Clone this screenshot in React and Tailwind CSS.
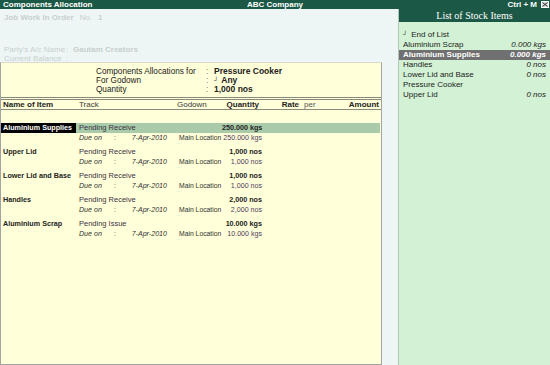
const allocations = [
  { name: 'Aluminium Supplies', track: 'Pending Receive', qty: '250.000 kgs', active: true },
  { name: 'Upper Lid', track: 'Pending Receive', qty: '1,000 nos' },
  { name: 'Lower Lid and Base', track: 'Pending Receive', qty: '1,000 nos' },
  { name: 'Handles', track: 'Pending Receive', qty: '2,000 nos' },
  { name: 'Aluminium Scrap', track: 'Pending Issue', qty: '10.000 kgs' },
]

const stockItems = [
  { name: 'Aluminium Scrap', qty: '0.000 kgs' },
  { name: 'Aluminium Supplies', qty: '0.000 kgs', active: true },
  { name: 'Handles', qty: '0 nos' },
  { name: 'Lower Lid and Base', qty: '0 nos' },
  { name: 'Pressure Cooker', qty: '' },
  { name: 'Upper Lid', qty: '0 nos' },
]

const App = () => {
  return (
    <div className="w-[550px] h-[365px] flex flex-col overflow-hidden bg-[#eef6f5] font-['Liberation_Sans',Arial,sans-serif] text-[#222]">
      {/* title bar */}
      <div className="h-[9px] flex items-center bg-[#1c5846] text-white font-bold text-[8px] leading-[9px]">
        <span className="w-[247px] pl-[3px] whitespace-nowrap">Components Allocation</span>
        <span className="flex-1 whitespace-nowrap">ABC Company</span>
        <span className="pr-[4px] whitespace-nowrap">Ctrl + M</span>
        <span className="w-[8px] h-[7px] mr-[1px] flex items-center justify-center bg-[#d6dcd9] border border-white">
          <svg width="6" height="5" viewBox="0 0 6 5">
            <path d="M0.5 0.5 L5.5 4.5 M5.5 0.5 L0.5 4.5" stroke="#333" strokeWidth="1" />
          </svg>
        </span>
      </div>

      <div className="flex flex-1 min-h-0">
        {/* left: voucher + allocation panel */}
        <div className="w-[398px] flex flex-col">
          <div className="h-[53px] pl-[4px] pt-[4px] text-[8px] text-[#c7cfce] overflow-hidden">
            <div className="leading-[9px] whitespace-nowrap">
              <span className="font-bold">Job Work In Order</span>
              <span className="ml-[6px]">No.</span>
              <span className="ml-[6px] font-bold">1</span>
            </div>
            <div className="mt-[24px] leading-[8.5px] flex whitespace-nowrap">
              <span className="w-[62px]">Party's A/c Name</span>
              <span className="w-[7px]">:</span>
              <span className="font-bold">Gautam Creators</span>
            </div>
            <div className="leading-[8.5px] flex whitespace-nowrap">
              <span className="w-[62px]">Current Balance</span>
              <span className="w-[7px]">:</span>
            </div>
          </div>

          <div className="w-[382px] flex-1 bg-[#ffffd9] border-l border-r border-b border-t border-t-[#d9dccc] border-[#a3a3a3]">
            <div className="pt-[4px] text-[8.2px] leading-[9px]">
              <div className="flex">
                <span className="w-[205px] pl-[95px] whitespace-nowrap">Components Allocations for</span>
                <span className="w-[8px] text-[#777]">:</span>
                <span className="font-bold text-[8.5px]">Pressure Cooker</span>
              </div>
              <div className="flex">
                <span className="w-[205px] pl-[95px]">For Godown</span>
                <span className="w-[8px] text-[#777]">:</span>
                <span className="font-bold text-[8.5px]">
                  <span className="text-[6px] align-top mr-[3px] font-normal">┘</span>Any
                </span>
              </div>
              <div className="flex">
                <span className="w-[205px] pl-[95px]">Quantity</span>
                <span className="w-[8px] text-[#777]">:</span>
                <span className="font-bold text-[8.5px]">1,000 nos</span>
              </div>
            </div>

            {/* column header */}
            <div className="mt-[3px] h-[13px] flex items-center border-t-[3px] border-double border-b border-[#8a8a7a] text-[8px] whitespace-nowrap">
              <span className="w-[76px] pl-[2px] font-bold">Name of Item</span>
              <span className="w-[100px] pl-[2px] text-[#3a3a3a]">Track</span>
              <span className="w-[29px] text-[#3a3a3a]">Godown</span>
              <span className="w-[53px] text-right font-bold">Quantity</span>
              <span className="w-[40px] text-right font-bold">Rate</span>
              <span className="w-[22px] pl-[5px] text-[#555]">per</span>
              <span className="flex-1 text-right pr-[2px] font-bold">Amount</span>
            </div>

            {/* allocation rows */}
            <div className="pt-[13px] flex flex-col gap-[4px] whitespace-nowrap">
              {allocations.map((row) => (
                <div key={row.name}>
                  <div className="flex h-[10px] leading-[10px] text-[7.5px]">
                    <span
                      className={`w-[75px] pl-[2px] font-bold text-[7.2px] ${row.active ? 'bg-black text-white' : ''}`}
                    >
                      {row.name}
                    </span>
                    <div className={`flex-1 mr-[1px] flex pl-[3px] ${row.active ? 'bg-[#a9cba9]' : ''}`}>
                      <span className="w-[143px] text-[#3b3346]">{row.track}</span>
                      <span className="w-[40px] text-right font-bold text-[7.2px]">{row.qty}</span>
                    </div>
                  </div>
                  <div className="flex h-[10px] leading-[10px] text-[7.1px] pl-[78px]">
                    <span className="w-[35px] italic text-[#333]">Due on</span>
                    <span className="w-[8px] text-[#555]">:</span>
                    <span className="w-[45px] text-right italic text-[#333]">7-Apr-2010</span>
                    <span className="ml-[12px] w-[43px] text-[6.8px] text-[#333]">Main Location</span>
                    <span className="w-[40px] text-right text-[#4e3d63]">{row.qty}</span>
                  </div>
                </div>
              ))}
            </div>
          </div>
        </div>

        {/* right: list of stock items */}
        <div className="flex-1 flex flex-col bg-[#d3f1d4] border-l border-[#b4c4b8]">
          <div className="h-[13px] bg-[#1c5846] text-white text-center text-[10px] leading-[13px] font-['Liberation_Serif',serif]">
            List of Stock Items
          </div>
          <div className="pt-[8px] text-[8px] whitespace-nowrap">
            <div className="h-[10px] leading-[10px] pl-[4px] flex">
              <span className="text-[6px] leading-[8px] mr-[4px]">┘</span>
              <span>End of List</span>
            </div>
            {stockItems.map((item) => (
              <div
                key={item.name}
                className={`h-[10px] leading-[10px] px-[4px] flex justify-between ${
                  item.active ? 'bg-[#707070] text-white font-bold' : ''
                }`}
              >
                <span>{item.name}</span>
                <span className="italic">{item.qty}</span>
              </div>
            ))}
          </div>
        </div>
      </div>
    </div>
  )
}

export default App
